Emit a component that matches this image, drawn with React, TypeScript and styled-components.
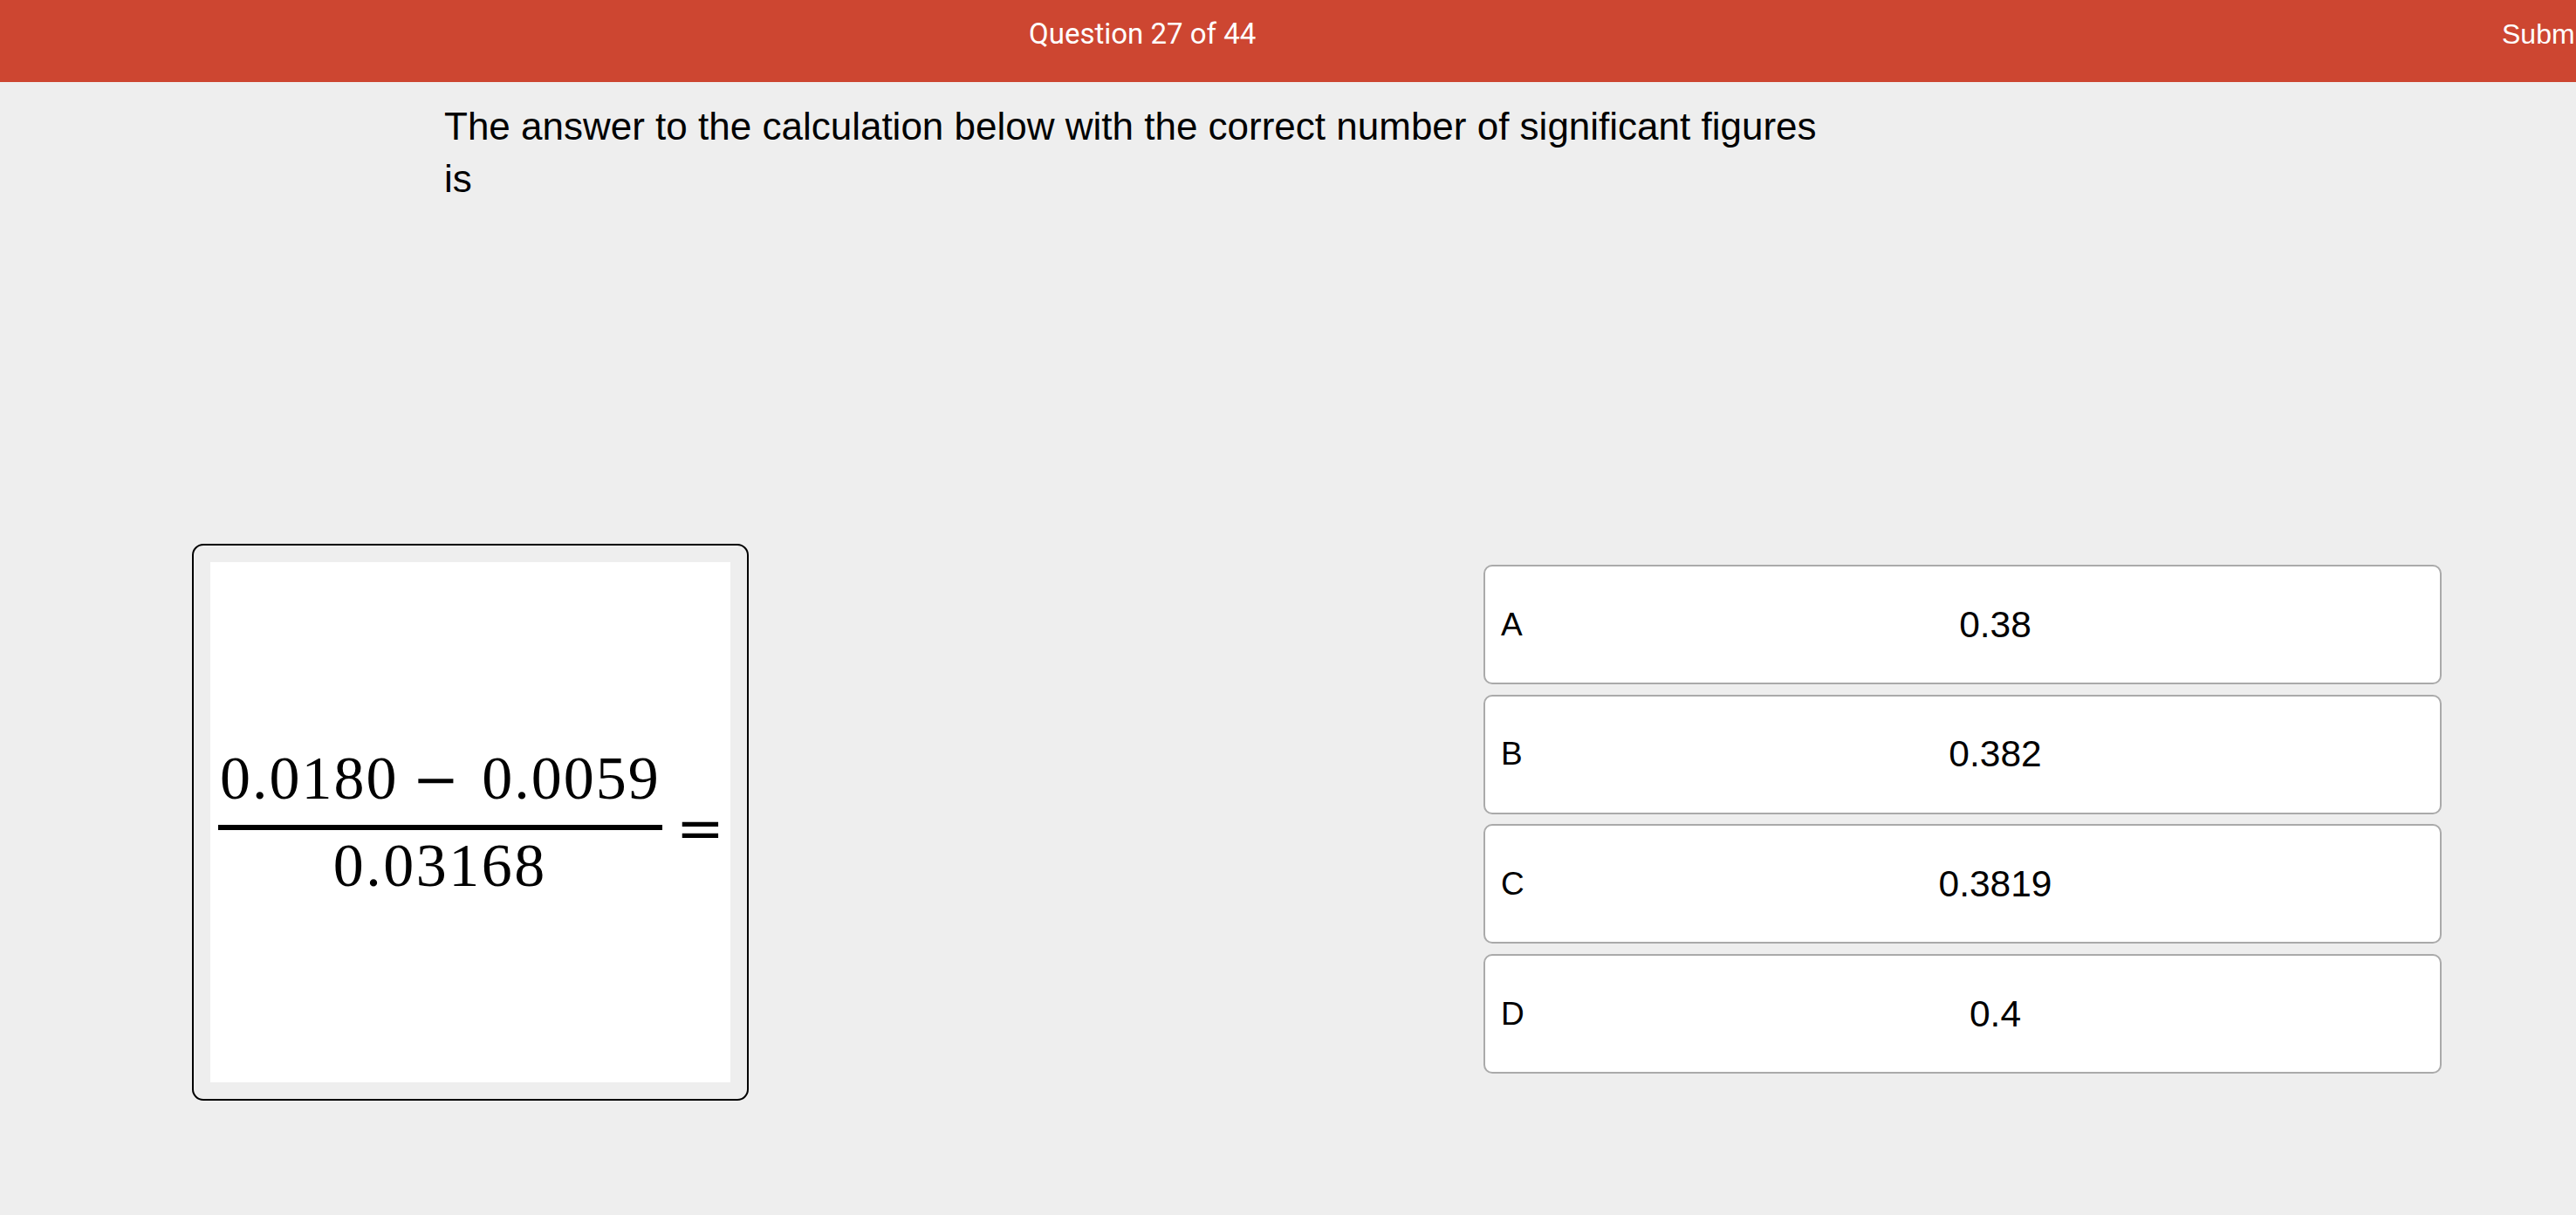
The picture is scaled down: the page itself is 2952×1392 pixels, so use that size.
import React from "react";
import styled, { createGlobalStyle } from "styled-components";

const GlobalStyle = createGlobalStyle`
  html, body {
    margin: 0;
    padding: 0;
    background: #eeeeee;
    overflow: hidden;
    font-family: "Liberation Sans", Arial, sans-serif;
  }
  * { box-sizing: border-box; }
`;

const Page = styled.div`
  width: 2952px;
  height: 1392px;
  background: #eeeeee;
  overflow: hidden;
`;

const Header = styled.header`
  height: 94px;
  background: #cd4631;
  color: #ffffff;
  display: grid;
  grid-template-columns: 1179px 1688px max-content;
  align-items: start;
  overflow: hidden;
  white-space: nowrap;
`;

const Title = styled.div`
  grid-column: 2;
  font-family: Roboto, "Liberation Sans", sans-serif;
  font-size: 33px;
  padding-top: 19px;
`;

const Submit = styled.div`
  grid-column: 3;
  font-family: "Liberation Sans", Arial, sans-serif;
  font-size: 32px;
  padding-top: 21px;
`;

const Question = styled.p`
  margin: 21px 0 0 509px;
  width: 1595px;
  font-size: 44px;
  line-height: 60px;
  color: #000000;
`;

const ContentRow = styled.div`
  display: flex;
  justify-content: space-between;
  align-items: flex-start;
  margin-top: 388px;
  padding: 0 154px 0 220px;
`;

const ImageFrame = styled.div`
  border: 2px solid #000000;
  border-radius: 13px;
  padding: 19px;
  background: #eeeeee;
`;

const ImageCanvas = styled.div`
  width: 596px;
  height: 596px;
  background: #ffffff;
  display: flex;
  align-items: center;
  padding-left: 9px;
`;

const FractionRow = styled.div`
  display: flex;
  align-items: flex-start;
`;

const Fraction = styled.div`
  display: flex;
  flex-direction: column;
  align-items: center;
`;

const Numerator = styled.div`
  display: flex;
  align-items: baseline;
  font-family: "Liberation Serif", "Times New Roman", serif;
  font-size: 70px;
  line-height: 70px;
  color: #000;
  margin-bottom: 18px;
  padding: 0 2px;
  white-space: nowrap;
`;

const Term = styled.span`
  letter-spacing: 2px;
`;

const Minus = styled.span<{ $before: number; $after: number }>`
  font-family: "DejaVu Serif", serif;
  font-size: 64px;
  line-height: 64px;
  margin-left: ${(p) => p.$before}px;
  margin-right: ${(p) => p.$after}px;
`;

const FracLine = styled.div`
  align-self: stretch;
  height: 6px;
  background: #000;
`;

const Denominator = styled.div`
  font-family: "Liberation Serif", "Times New Roman", serif;
  font-size: 70px;
  line-height: 70px;
  letter-spacing: 2.5px;
  color: #000;
  margin-top: 6px;
`;

const Equals = styled.div`
  font-family: "DejaVu Serif", serif;
  font-size: 66px;
  line-height: 66px;
  color: #000;
  margin-left: 16px;
  margin-top: 59px;
`;

const Options = styled.div`
  width: 1098px;
  margin-top: 24px;
  display: flex;
  flex-direction: column;
  gap: 11.7px;
`;

const OptionCard = styled.div`
  height: 137px;
  border: 2px solid #aaaaaa;
  border-radius: 10px;
  background: #ffffff;
  display: flex;
  align-items: center;
  color: #000;
`;

const OptionLetter = styled.span`
  flex-shrink: 0;
  width: 75px;
  padding-left: 18px;
  font-size: 37px;
`;

const OptionValue = styled.span`
  flex: 1;
  text-align: center;
  font-size: 42.5px;
`;

const options = [
  { letter: "A", value: "0.38" },
  { letter: "B", value: "0.382" },
  { letter: "C", value: "0.3819" },
  { letter: "D", value: "0.4" },
];

export default function App() {
  return (
    <Page>
      <GlobalStyle />
      <Header>
        <Title>Question 27 of 44</Title>
        <Submit>Submit</Submit>
      </Header>
      <Question>
        The answer to the calculation below with the correct number of significant figures is
      </Question>
      <ContentRow>
        <ImageFrame>
          <ImageCanvas>
            <FractionRow>
              <Fraction>
                <Numerator>
                  <Term>0.0180</Term>
                  <Minus $before={16} $after={26}>−</Minus>
                  <Term>0.0059</Term>
                </Numerator>
                <FracLine />
                <Denominator>0.03168</Denominator>
              </Fraction>
              <Equals>=</Equals>
            </FractionRow>
          </ImageCanvas>
        </ImageFrame>
        <Options>
          {options.map((o) => (
            <OptionCard key={o.letter}>
              <OptionLetter>{o.letter}</OptionLetter>
              <OptionValue>{o.value}</OptionValue>
            </OptionCard>
          ))}
        </Options>
      </ContentRow>
    </Page>
  );
}
